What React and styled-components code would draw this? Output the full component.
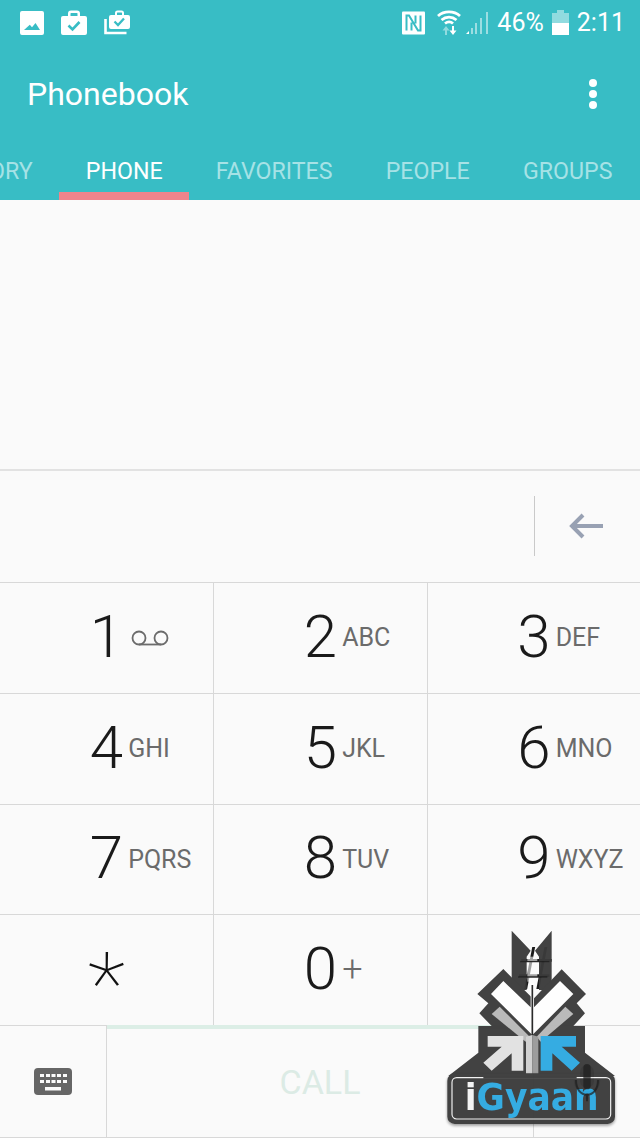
import React from 'react';
import styled, { createGlobalStyle } from 'styled-components';

const GlobalStyle = createGlobalStyle`
	html, body {
		margin: 0;
		padding: 0;
		background: #fafafa;
	}
	body {
		font-family: Roboto, "Liberation Sans", sans-serif;
	}
`;

const Page = styled.div`
	position: relative;
	width: 640px;
	height: 1138px;
	overflow: hidden;
	background: #fafafa;
`;

const Header = styled.header`
	background: #38bdc5;
	color: #fff;
`;

const StatusBar = styled.div`
	box-sizing: border-box;
	height: 48px;
	display: flex;
	align-items: center;
	justify-content: space-between;
	padding: 0 15px 3px 20px;
`;

const StatusGroup = styled.div`
	display: flex;
	align-items: center;
	gap: ${(props) => props.$gap}px;
`;

const StatusText = styled.span`
	font-size: 25px;
	white-space: nowrap;
`;

const Toolbar = styled.div`
	height: 92px;
	display: flex;
	align-items: center;
	justify-content: space-between;
	padding: 0 35px 0 27px;
`;

const Title = styled.h1`
	margin: 0;
	font-size: 32px;
	font-weight: 400;
`;

const Tabs = styled.nav`
	height: 60px;
	display: flex;
	justify-content: flex-end;
	padding-right: 1px;
	overflow: hidden;
`;

const Tab = styled.div`
	flex: none;
	box-sizing: border-box;
	height: 60px;
	padding: 0 26.6px;
	font-size: 23.2px;
	line-height: 62px;
	color: ${(props) => (props.$active ? '#ffffff' : '#a6e2e6')};
	border-bottom: 8px solid ${(props) => (props.$active ? '#f0848c' : 'transparent')};
`;

const Display = styled.div`
	height: 269px;
	border-bottom: 2px solid #e2e2e2;
`;

const InputRow = styled.div`
	box-sizing: border-box;
	height: 112px;
	display: flex;
	align-items: center;
	justify-content: flex-end;
	padding-bottom: 2px;
	border-bottom: 1px solid #d8d8d8;
`;

const Divider = styled.div`
	width: 1px;
	height: 60px;
	background: #c9c9c9;
`;

const Backspace = styled.div`
	box-sizing: border-box;
	width: 105px;
	display: flex;
	justify-content: center;
	padding-right: 4px;
`;

const Keypad = styled.div`
	display: grid;
	grid-template-columns: 214px 214px 1fr;
	grid-auto-rows: 110.75px;
`;

const Key = styled.div`
	box-sizing: border-box;
	display: grid;
	grid-template-columns: 1fr auto 1fr;
	align-items: center;
	column-gap: 5px;
	padding-bottom: 2px;
	border-bottom: 1px solid #d8d8d8;
	border-right: ${(props) => (props.$last ? 'none' : '1px solid #d8d8d8')};
`;

const Digit = styled.span`
	grid-column: 2;
	font-size: 60px;
	font-weight: 300;
	line-height: 60px;
	color: #1a1a1a;
`;

const Star = styled(Digit)`
	font-size: 88px;
	font-weight: 100;
	line-height: 60px;
	color: #111;
	transform: translateY(15px);
`;

const Letters = styled.span`
	grid-column: 3;
	padding-top: ${(props) => (props.$large ? 0 : 2)}px;
	font-size: ${(props) => (props.$large ? 36 : 25)}px;
	font-weight: ${(props) => (props.$large ? 300 : 400)};
	color: #6b6b6b;
	white-space: nowrap;
`;

const VoicemailSlot = styled.span`
	grid-column: 3;
	padding: 2px 0 0 3px;
`;

const BottomRow = styled.div`
	height: 112px;
	display: grid;
	grid-template-columns: 107px 427px 1fr;
	box-sizing: border-box;
	border-bottom: 1px solid #d8d8d8;
`;

const SideButton = styled.div`
	display: flex;
	align-items: center;
	justify-content: center;
	border-right: ${(props) => (props.$divider ? '1px solid #d8d8d8' : 'none')};
`;

const CallButton = styled.div`
	display: flex;
	align-items: center;
	justify-content: center;
	padding-bottom: 3px;
	border-top: 4px solid #dceee6;
	border-right: 1px solid #d8d8d8;
	margin-top: -1px;
	font-size: 34px;
	color: #dcebe5;
`;

const WatermarkBox = styled.div`
	position: absolute;
	left: 420px;
	top: 920px;
	width: 220px;
	height: 218px;
`;

const keys = [
	{ digit: '1', voicemail: true },
	{ digit: '2', letters: 'ABC' },
	{ digit: '3', letters: 'DEF' },
	{ digit: '4', letters: 'GHI' },
	{ digit: '5', letters: 'JKL' },
	{ digit: '6', letters: 'MNO' },
	{ digit: '7', letters: 'PQRS' },
	{ digit: '8', letters: 'TUV' },
	{ digit: '9', letters: 'WXYZ' },
	{ digit: '*' },
	{ digit: '0', letters: '+', large: true },
	{ digit: '#' },
];

const tabs = ['HISTORY', 'PHONE', 'FAVORITES', 'PEOPLE', 'GROUPS'];

const ImageIcon = () => (
	<svg width="24" height="24" viewBox="0 0 24 24">
		<path
			fill="#fff"
			fillRule="evenodd"
			d="M2 0h20a2 2 0 0 1 2 2v20a2 2 0 0 1-2 2H2a2 2 0 0 1-2-2V2a2 2 0 0 1 2-2zM4 19h16l-4.500-7-3.500 4.200-2.200-2.400z"
		/>
	</svg>
);

const CaseIcon = () => (
	<svg width="26" height="25" viewBox="0 0 26 25">
		<path
			fill="#fff"
			d="M2 6h5V3.500a3 3 0 0 1 3-3h6a3 3 0 0 1 3 3V6h5a2 2 0 0 1 2 2v15a2 2 0 0 1-2 2H2a2 2 0 0 1-2-2V8a2 2 0 0 1 2-2zM9.500 6h7V3.500a.5.5 0 0 0-.5-.5h-6a.5.5 0 0 0-.5.5z"
		/>
		<path d="M7.500 15.500l4 4 7-7.500" fill="none" stroke="#38bdc5" strokeWidth="2.600" />
	</svg>
);

const CaseStackIcon = () => (
	<svg width="26" height="25" viewBox="0 0 26 25">
		<path
			fill="#fff"
			d="M7 5h4V3a2.500 2.500 0 0 1 2.500-2.500h4A2.500 2.500 0 0 1 20 3v2h4a2 2 0 0 1 2 2v10a2 2 0 0 1-2 2H7a2 2 0 0 1-2-2V7a2 2 0 0 1 2-2zM13 5h5V3a.5.5 0 0 0-.5-.5h-4a.5.5 0 0 0-.5.5z"
		/>
		<path d="M10.500 11.500l3.500 3.500 6-6.500" fill="none" stroke="#38bdc5" strokeWidth="2.300" />
		<path d="M1.500 9v14h21" fill="none" stroke="#fff" strokeWidth="2.600" />
	</svg>
);

const NfcIcon = () => (
	<svg width="26" height="24" viewBox="0 0 26 24">
		<rect x="0" y="0.500" width="23" height="23" rx="1" fill="#fff" />
		<path
			d="M4.500 19.500V4.500h2.500l9 15h2.500V4.500M9.500 19.500v-8M13.500 4.500v8"
			fill="none"
			stroke="#38bdc5"
			strokeWidth="2"
		/>
	</svg>
);

const WifiSignalIcon = () => (
	<svg width="53" height="28" viewBox="0 0 53 28">
		<g fill="none" stroke="#fff" strokeWidth="2.800">
			<path d="M2 7c6-5.500 16-5.500 22 0" />
			<path d="M5.500 11c4.500-3.800 10.500-3.800 15 0" />
			<path d="M9 14.500c2.800-2.200 5.500-2.200 8 0" />
		</g>
		<path d="M9 26v-4.500H6.500L10 17l3.500 4.500H11V26z" fill="#fff" opacity="0.45" />
		<path d="M16 17v4.500h-2.500L17 26l3.500-4.500H18V17z" fill="#fff" />
		<path d="M30 25h3v-3z" fill="#fff" />
		<g stroke="#fff" strokeWidth="2" opacity="0.5">
			<path d="M36 25v-6M40 25v-11M45 25v-16M51 25V3" />
		</g>
	</svg>
);

const BatteryIcon = () => (
	<svg width="17" height="25" viewBox="0 0 17 25">
		<path d="M0 3h5V0h7v3h5v10H0z" fill="#fff" opacity="0.45" />
		<path d="M0 13h17v12H0z" fill="#fff" />
	</svg>
);

const MoreIcon = () => (
	<svg width="24" height="40" viewBox="0 0 24 40">
		<circle cx="12" cy="9" r="4" fill="#fff" />
		<circle cx="12" cy="20" r="4" fill="#fff" />
		<circle cx="12" cy="31" r="4" fill="#fff" />
	</svg>
);

const BackspaceIcon = () => (
	<svg width="36" height="26" viewBox="0 0 36 26">
		<path d="M35 13H4M15 2L4 13l11 11" fill="none" stroke="#98a1b3" strokeWidth="4" />
	</svg>
);

const VoicemailIcon = () => (
	<svg width="38" height="16" viewBox="0 0 38 16" style={{ display: 'block' }}>
		<g fill="none" stroke="#6b6b6b" strokeWidth="1.800">
			<circle cx="8" cy="8" r="6.500" />
			<circle cx="30" cy="8" r="6.500" />
			<path d="M8 14.500h22" />
		</g>
	</svg>
);

const KeyboardIcon = () => (
	<svg width="38" height="27" viewBox="0 0 38 27">
		<rect width="38" height="27" rx="4" fill="#666" />
		<g fill="#fafafa">
			<path d="M6 6h4v3H6zM12 6h4v3h-4zM17.500 6h4v3h-4zM23 6h4v3h-4zM29 6h4v3h-4z" />
			<path d="M6 12h4v3H6zM12 12h4v3h-4zM17.500 12h4v3h-4zM23 12h4v3h-4zM29 12h4v3h-4z" />
			<path d="M11 19h16v3.500H11z" />
		</g>
	</svg>
);

const MicIcon = () => (
	<svg width="28" height="34" viewBox="0 0 28 34">
		<rect x="7" y="0" width="14" height="23" rx="7" fill="#444" />
		<path d="M2 15c0 8 5 12 12 12s12-4 12-12M14 27v7" fill="none" stroke="#444" strokeWidth="2.500" />
	</svg>
);

const Watermark = () => (
	<WatermarkBox>
		<svg width="220" height="218" viewBox="0 0 660 654">
			<defs>
				<filter id="logoShadow" x="-10%" y="-10%" width="120%" height="130%">
					<feDropShadow dx="0" dy="5" stdDeviation="4" floodColor="#000" floodOpacity="0.4" />
				</filter>
			</defs>
			<path d="M322 110h30v75h-30z" fill="#fafafa" opacity="0.6" />
			<g opacity="0.96">
				<g fill="#3b3b3b">
					<path d="M275 32l57 60-12 18v100h-45z" />
					<path d="M395 32l-50 60 12 18v100h38z" />
					<path d="M250 147l90 90 85-89 73 74-28 28 25 30-35 38H215l-37-38 27-30-33-28z" />
					<path d="M175 318h320v80l90 70H85l90-70z" />
				</g>
				<path d="M300 125h88M294 171h88" stroke="#222" strokeWidth="4" fill="none" />
				<path d="M213 222l37-39 82 79v-72h10v72l78-79 40 39-123 123z" fill="#fff" />
				<path d="M337 195v150" stroke="#222" strokeWidth="5" fill="none" />
				<path d="M215 282l24-22 90 90-12 15z" fill="#b8b8b8" />
				<path d="M460 282l-24-22-86 90 12 15z" fill="#b8b8b8" />
				<path d="M203 348h107v104h-35v-52l-60 52-25-24 55-48h-42z" fill="#e2e2e2" />
				<path d="M468 348H362v104h35v-52l58 52 25-24-55-48h43z" fill="#2ea9e2" />
				<path d="M318 350l19-5v135l-19-20z" fill="#d0d0d0" />
				<path d="M355 350l-18-5v135l18-20z" fill="#9a9a9a" />
				<rect x="82" y="460" width="503" height="152" rx="22" fill="#3b3b3b" filter="url(#logoShadow)" />
				<rect x="96" y="473" width="476" height="124" rx="14" fill="none" stroke="#f2f2f2" strokeWidth="3.500" />
				<path d="M190 473h280" stroke="#3b3b3b" strokeWidth="6" />
				<text
					x="134"
					y="570"
					fontFamily="'DejaVu Sans', sans-serif"
					fontWeight="700"
					fontSize="114"
					textLength="402"
					lengthAdjust="spacingAndGlyphs"
				>
					<tspan fill="#f4f4f4">i</tspan>
					<tspan fill="#2ea9e2">Gyaan</tspan>
				</text>
			</g>
			<g fill="none" stroke="#1e1e1e" opacity="0.7">
				<rect x="490" y="432" width="22" height="76" rx="11" fill="#1e1e1e" stroke="none" />
				<path d="M468 480c0 28 14 44 33 44s33-16 33-44M501 524v20" strokeWidth="6" />
			</g>
		</svg>
	</WatermarkBox>
);

const App = () => {
	return (
		<Page>
			<GlobalStyle />
			<Header>
				<StatusBar>
					<StatusGroup $gap={17}>
						<ImageIcon />
						<CaseIcon />
						<CaseStackIcon />
					</StatusGroup>
					<StatusGroup $gap={8}>
						<NfcIcon />
						<WifiSignalIcon />
						<StatusText>46%</StatusText>
						<BatteryIcon />
						<StatusText>2:11</StatusText>
					</StatusGroup>
				</StatusBar>
				<Toolbar>
					<Title>Phonebook</Title>
					<MoreIcon />
				</Toolbar>
				<Tabs>
					{tabs.map((tab) => (
						<Tab key={tab} $active={tab === 'PHONE'}>
							{tab}
						</Tab>
					))}
				</Tabs>
			</Header>
			<Display />
			<InputRow>
				<Divider />
				<Backspace>
					<BackspaceIcon />
				</Backspace>
			</InputRow>
			<Keypad>
				{keys.map((key, index) => (
					<Key key={key.digit} $last={index % 3 === 2}>
						{key.digit === '*' ? <Star>*</Star> : <Digit>{key.digit}</Digit>}
						{key.voicemail && (
							<VoicemailSlot>
								<VoicemailIcon />
							</VoicemailSlot>
						)}
						{key.letters && <Letters $large={key.large}>{key.letters}</Letters>}
					</Key>
				))}
			</Keypad>
			<BottomRow>
				<SideButton $divider>
					<KeyboardIcon />
				</SideButton>
				<CallButton>CALL</CallButton>
				<SideButton>
					<MicIcon />
				</SideButton>
			</BottomRow>
			<Watermark />
		</Page>
	);
};

export default App;
